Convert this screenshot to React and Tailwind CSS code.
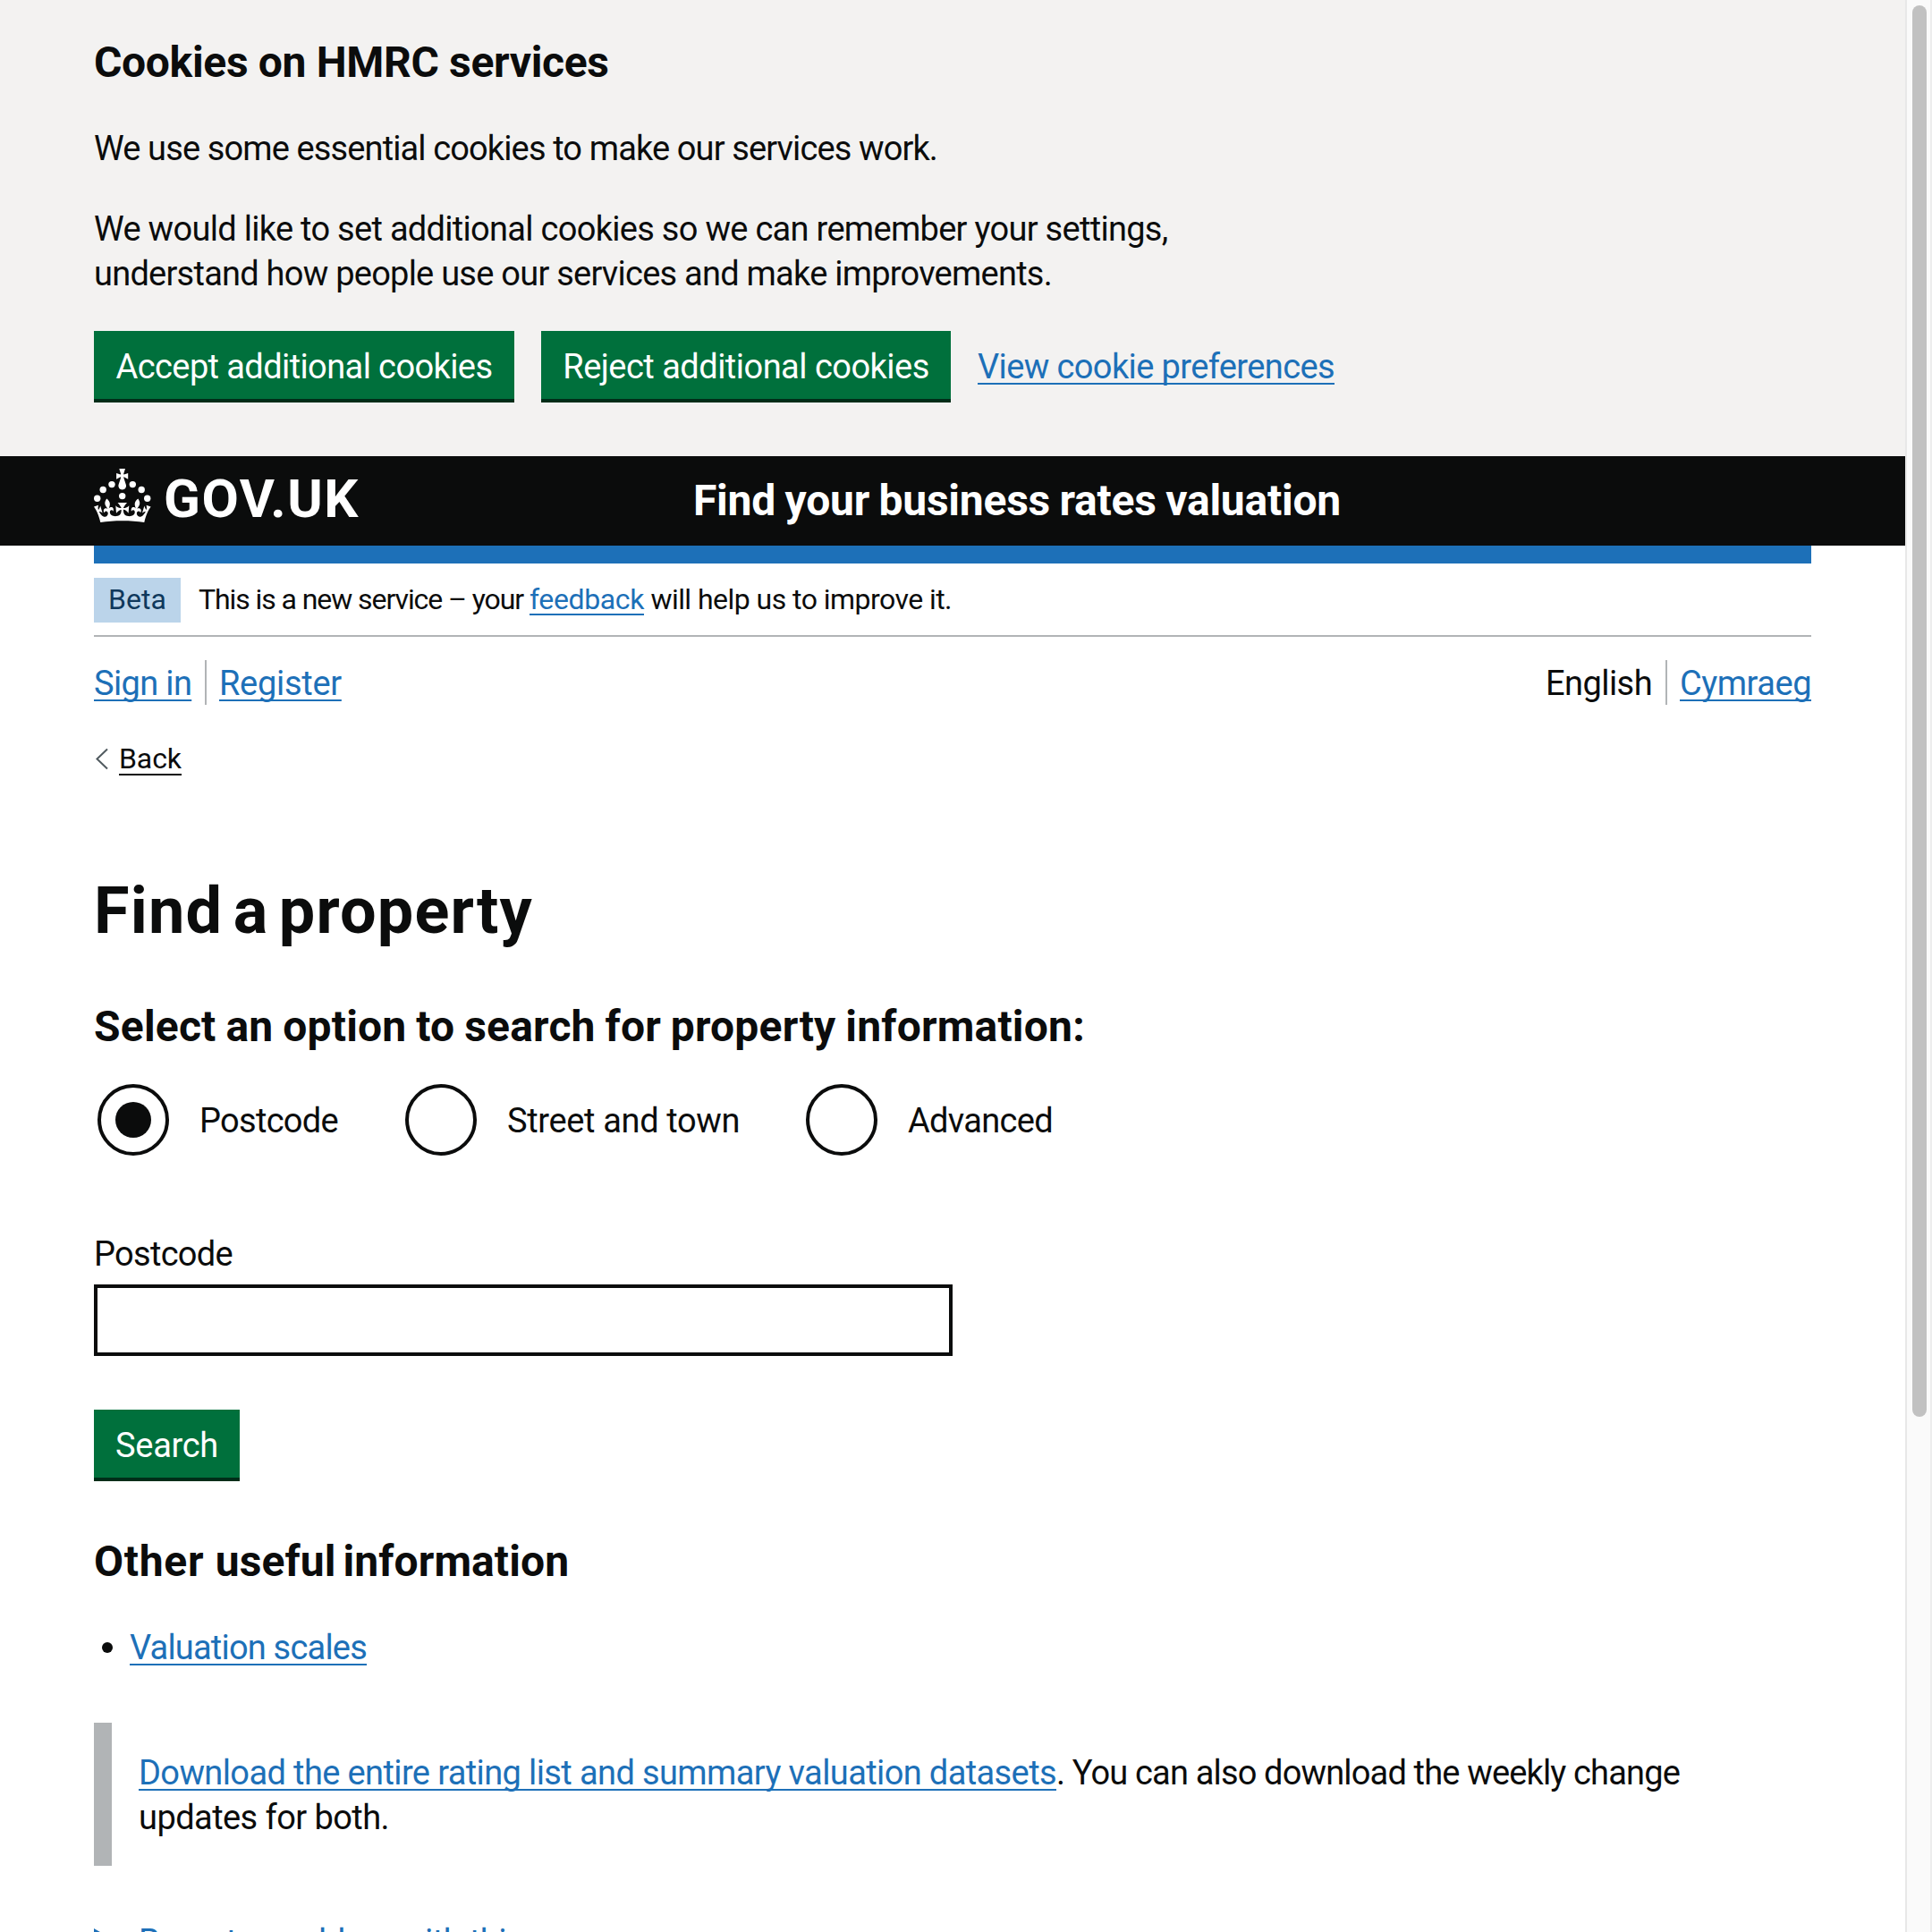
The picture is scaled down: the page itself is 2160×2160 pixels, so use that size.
const LINK = "whitespace-pre text-[#1d70b8] underline decoration-2 underline-offset-[5px] [text-decoration-skip-ink:none]";

function Crown() {
  return (
    <svg width="64" height="60" viewBox="0 0 64 60" fill="#fff" className="block">
      <circle cx="20" cy="17.6" r="3.7" />
      <circle cx="10.2" cy="23.5" r="3.7" />
      <circle cx="3.7" cy="33.2" r="3.7" />
      <circle cx="31.7" cy="30.6" r="3.7" />
      <circle cx="43.3" cy="17.6" r="3.7" />
      <circle cx="53.2" cy="23.5" r="3.7" />
      <circle cx="59.7" cy="33.2" r="3.7" />
      <path d="M33.1,9.8c.2-.1.3-.3.5-.5l4.6,2.4v-6.8l-4.6,1.5c-.1-.2-.3-.3-.5-.5l1.9-5.9h-6.7l1.9,5.9c-.2.1-.3.3-.5.5l-4.6-1.5v6.8l4.6-2.4c.1.2.3.3.5.5l-2.6,8c-.9,2.8,1.2,5.7,4.1,5.7h0c3,0,5.1-2.9,4.1-5.7l-2.6-8ZM37,37.9s-3.4,3.8-4.1,6.1c2.2,0,4.2-.5,6.4-2.8l-.7,8.5c-2-2.8-4.4-4.1-5.7-3.8.1,3.1.5,6.7,5.8,7.2,3.7.3,6.7-1.5,7-3.8.4-2.6-2-4.3-3.7-1.6-1.4-4.5,2.4-6.1,4.9-3.2-1.9-4.5-1.8-7.7,2.4-10.9,3,4,2.6,7.3-1.2,11.1,2.4-1.3,6.2,0,4,4.6-1.2-2.8-3.7-2.2-4.2.2-.3,1.7.7,3.7,3,4.2,1.9.3,4.7-.9,7-5.9-1.3,0-2.4.7-3.9,1.7l2.4-8c.6,2.3,1.4,3.7,2.2,4.5.6-1.6.5-2.8,0-5.3l5,1.8c-2.6,3.6-5.2,8.7-7.3,17.5-7.4-1.1-15.7-1.7-24.5-1.7h0c-8.8,0-17.1.6-24.5,1.7-2.1-8.9-4.7-13.9-7.3-17.5l5-1.8c-.5,2.5-.6,3.7,0,5.3.8-.8,1.6-2.3,2.2-4.5l2.4,8c-1.5-1-2.6-1.7-3.9-1.7,2.3,5,5.2,6.2,7,5.9,2.3-.4,3.3-2.4,3-4.2-.5-2.4-3-3.1-4.2-.2-2.2-4.6,1.6-6,4-4.6-3.7-3.7-4.2-7.1-1.2-11.1,4.2,3.2,4.3,6.4,2.4,10.9,2.5-2.8,6.3-1.3,4.9,3.2-1.8-2.7-4.1-1-3.7,1.6.3,2.3,3.3,4.1,7,3.8,5.4-.5,5.7-4.2,5.8-7.2-1.3-.2-3.7,1-5.7,3.8l-.7-8.5c2.2,2.3,4.2,2.7,6.4,2.8-.7-2.3-4.1-6.1-4.1-6.1h10.6,0Z" />
    </svg>
  );
}

function Button({ className = "", children }) {
  return (
    <button className={"h-20 border-b-4 border-[#002d18] bg-[#00703c] pt-[15px] pb-[11px] text-center leading-[50px] whitespace-nowrap text-white " + className}>
      {children}
    </button>
  );
}

function Radio({ checked, className = "", children }) {
  return (
    <label className={"flex items-center whitespace-nowrap " + className}>
      <span className="flex size-20 shrink-0 items-center justify-center rounded-full border-4 border-[#0b0c0c]">
        {checked && <span className="size-10 rounded-full bg-[#0b0c0c]" />}
      </span>
      <span className="mt-[2px] ml-[34px]">{children}</span>
    </label>
  );
}

function CookieBanner() {
  return (
    <section className="h-[510px] bg-[#f3f2f1] px-[105px] pt-10">
      <h2 className="text-[48px] leading-[60px] font-bold tracking-[-0.33px]">Cookies on HMRC services</h2>
      <p className="mt-[41px] tracking-[-0.877px]">We use some essential cookies to make our services work.</p>
      <p className="mt-10">
        <span className="tracking-[-0.706px]">We would like to set additional cookies so we can remember your settings,</span>
        <br />
        <span className="tracking-[-0.758px]">understand how people use our services and make improvements.</span>
      </p>
      <div className="mt-[39px] flex items-center">
        <Button className="w-[470px] tracking-[-0.6px]">Accept additional cookies</Button>
        <Button className="ml-[30px] w-[458px] tracking-[-0.52px]">Reject additional cookies</Button>
        <a className={LINK + " ml-[30px] tracking-[-0.614px]"}>View cookie preferences</a>
      </div>
    </section>
  );
}

function Header() {
  return (
    <header className="flex h-[100px] bg-[#0b0c0c] px-[105px] text-white">
      <div className="flex w-[670px] pt-[14px]">
        <Crown />
        <span className="-mt-px ml-[14px] text-[60px] leading-[70px] font-bold tracking-[1.578px]">GOV.UK</span>
      </div>
      <div className="pt-5 text-[48px] leading-[60px] font-bold tracking-[-0.23px] [word-spacing:-1.2px]">Find your business rates valuation</div>
    </header>
  );
}

export default function App() {
  return (
    <div className="flex h-[2160px] w-[2160px] overflow-hidden bg-white font-['Roboto',sans-serif] text-[38px] leading-[50px] text-[#0b0c0c]">
      <div className="w-[2130px] shrink-0">
        <CookieBanner />
        <Header />
        <main className="px-[105px]">
          <div className="h-5 bg-[#1d70b8]" />
          <div className="flex h-[82px] border-b-2 border-[#b1b4b6] pt-4 text-[32px] leading-[48px]">
            <strong className="h-[50px] w-[97px] bg-[#bbd4ea] text-center font-normal text-[#0f385c]">Beta</strong>
            <span className="ml-5 whitespace-pre">
              <span className="tracking-[-1.077px]">{"This is a new service – your "}</span>
              <a className={LINK + " tracking-[-0.385px]"}>feedback</a>
              <span className="tracking-[-0.544px]">{" will help us to improve it."}</span>
            </span>
          </div>
          <div className="mt-[26px] flex">
            <a className={LINK + " mt-px w-[109px] tracking-[-0.65px]"}>Sign in</a>
            <span className="ml-[15px] h-[50px] w-[2px] bg-[#b1b4b6]" />
            <a className={LINK + " mt-px ml-[14px] tracking-[-0.3px]"}>Register</a>
            <span className="mt-px ml-auto tracking-[-0.565px]">English</span>
            <span className="mr-[14px] ml-[15px] h-[50px] w-[2px] bg-[#b1b4b6]" />
            <a className={LINK + " mt-px tracking-[-0.478px]"}>Cymraeg</a>
          </div>
          <div className="mt-[39px] flex text-[32px] leading-10">
            <svg width="18" height="40" viewBox="0 0 18 40" className="mr-[10px]" fill="none" stroke="#505a5f" strokeWidth="2">
              <path d="M15 9.5 3.5 20.5 15 31.5" />
            </svg>
            <a className="tracking-[-0.078px] underline decoration-2 underline-offset-[6px]">Back</a>
          </div>
          <h1 className="mt-[111px] text-[72px] leading-[80px] font-bold tracking-[1.2px] [word-spacing:-7.7px]">Find a property</h1>
          <h2 className="mt-[59px] text-[48px] leading-[60px] font-bold tracking-[0.2px] [word-spacing:-1.3px]">Select an option to search for property information:</h2>
          <div className="mt-[34px] flex pl-1">
            <Radio checked className="w-[344px] tracking-[-0.7px]">Postcode</Radio>
            <Radio className="w-[448px] tracking-[-0.35px]">Street and town</Radio>
            <Radio className="tracking-[-0.686px]">Advanced</Radio>
          </div>
          <label className="mt-[85px] block tracking-[-0.7px]">Postcode</label>
          <div className="mt-[9px] h-20 w-[960px] border-4 border-[#0b0c0c]" />
          <Button className="mt-[60px] block w-[163px] tracking-[-0.289px]">Search</Button>
          <h2 className="mt-[60px] text-[48px] leading-[60px] font-bold tracking-[0.08px]">
            <span className="tracking-[0.7px]">Other </span>
            <span className="[word-spacing:-4px]">useful information</span>
          </h2>
          <ul className="mt-[41px]">
            <li className="flex items-center pl-[9px]">
              <span className="-mt-px mr-[19px] size-3 rounded-full bg-[#0b0c0c]" />
              <a className={LINK + " tracking-[-0.801px]"}>Valuation scales</a>
            </li>
          </ul>
          <div className="mt-[59px] h-40 border-l-[20px] border-[#b1b4b6] pt-[31px] pl-[30px]">
            <a className={LINK + " tracking-[-0.614px]"}>Download the entire rating list and summary valuation datasets</a>
            <span className="tracking-[-0.84px]">. You can also download the weekly change</span>
            <br />
            <span className="tracking-[-0.564px]">updates for both.</span>
          </div>
          <div className="mt-[60px] flex">
            <svg width="50" height="50" viewBox="0 0 50 50" fill="#1d70b8">
              <path d="M0 10 24 24 0 38Z" />
            </svg>
            <a className={LINK + " tracking-[-0.543px]"}>Report a problem with this page</a>
          </div>
        </main>
      </div>
      <div className="h-full w-[30px] border-x-2 border-r-[#ededed] border-l-[#e8e8e8] bg-[#fafafa] pt-[6px] pl-[6px]">
        <div className="h-[1578px] w-4 rounded-full bg-[#c1c1c1]" />
      </div>
    </div>
  );
}
